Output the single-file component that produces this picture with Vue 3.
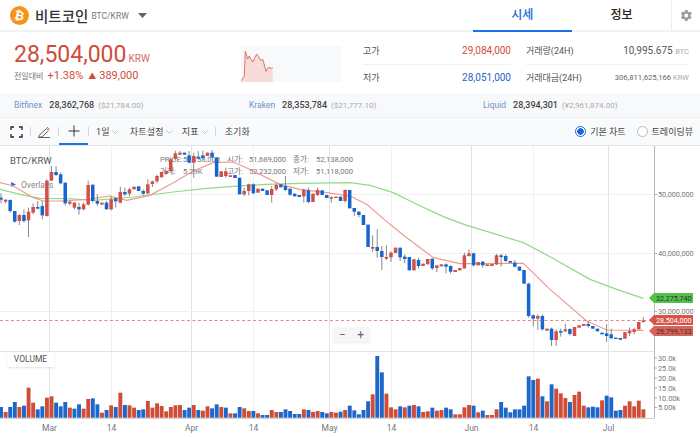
<script setup>
const raw = `b155,161,142,172 r161,167,160,172 b162,195,160,200 b195,227,195,230 r207,225,205,237 b207,225,190,230 r197,223,185,273 r183,200,172,205 b183,188,165,190 b180,208,165,220 r104,210,100,212 r78,104,60,104 b78,87,60,90 b85,112,80,115 b110,172,110,178 r167,173,165,178 r170,185,168,190 b183,190,170,206 r175,190,170,193 r117,176,104,178 b116,165,116,170 b165,173,145,180 r170,176,170,176 b170,190,165,190 r160,190,150,193 b157,166,155,185 r138,170,122,172 b138,145,125,150 r130,143,126,150 r122,130,122,130 b121,135,121,135 b135,143,130,148 r115,142,100,145 r106,114,104,123 r90,106,86,112 r78,94,78,94 r75,84,75,84 r40,75,40,78 r22,38,14,42 r20,26,15,28 b20,26,20,26 b28,50,15,52 r30,50,20,95 b32,38,15,40 b28,36,14,40 r20,30,20,30 b20,34,12,36 b35,92,35,92 r76,93,76,93 r76,90,65,95 r88,93,88,93 b87,96,87,96 b95,145,95,145 r135,145,125,150 r115,135,113,148 b115,142,112,143 r128,140,128,140 b128,135,128,135 b133,147,133,147 r129,147,120,170 r117,130,112,135 b115,124,115,124 b120,132,90,135 b128,146,128,150 b143,151,143,151 b147,153,147,153 r132,151,128,170 b133,168,125,172 r143,168,143,168 r132,147,125,150 b133,147,133,147 b147,156,147,156 r154,158,150,170 r152,156,152,156 b152,165,152,165 r132,165,130,170 b132,187,132,187 b186,197,186,210 b197,207,197,214 b207,237,207,237 b236,303,236,303 r303,308,268,318 b303,315,250,335 b315,333,300,372 r333,338,298,342 r320,334,316,348 r305,321,305,321 b305,334,305,345 b332,339,325,352 b333,373,333,373 r340,373,340,373 b342,360,335,368 r353,360,353,360 r339,355,339,355 b338,367,338,372 r358,366,358,378 r355,361,355,361 b355,362,352,382 b360,377,358,383 r372,378,372,378 r366,373,366,373 r328,367,320,368 r322,330,310,332 b322,358,320,362 r348,358,348,358 b347,358,345,365 r355,360,355,360 r354,360,354,360 r328,355,324,357 b328,333,324,362 b330,345,325,348 b345,350,345,350 b350,362,342,365 b362,374,362,374 b372,413,372,413 b413,510,410,515 b508,518,505,540 r510,518,505,552 b510,550,505,553 r548,554,548,554 b548,582,545,600 r556,582,550,600 b555,560,548,572 r550,556,533,558 b549,564,547,568 r543,570,543,570 r538,545,538,545 r534,540,534,540 b534,540,525,545 b540,548,540,548 b548,556,548,556 b560,565,560,565 b562,570,535,588 b565,577,548,578 b575,579,575,579 b576,581,576,581 r558,578,558,578 r555,562,545,570 r550,558,545,565 r528,550,528,550 r523,528,513,530`
const candles = raw.split(' ').map((s, i) => {
  const [t, b, wt, wb] = s.slice(1).split(',').map(Number)
  return { x: 1 + 4.588 * i, blue: s[0] === 'b', t: 145 + t / 3, b: 145 + b / 3, wt: 145 + wt / 3, wb: 145 + wb / 3 }
})
const volRaw = `b258 r273 b258 b243 r258 b254 r200 r245 b265 b256 r230 r226 b245 b256 b243 r260 b263 b250 r263 r234 b232 b250 r275 b267 r253 b258 r215 b252 r253 r260 b267 b265 r240 r260 r247 r255 r271 r258 r253 r252 b267 b260 r252 b267 r269 r256 b262 b250 r258 b260 r277 b277 b258 r262 r270 b270 r277 b282 b282 r267 r273 b273 b265 b270 b279 b279 r265 b267 r273 r270 b273 b277 r273 r275 b272 r267 b254 b268 b280 b267 b241 r220 b105 b154 r218 r259 r265 b256 r259 b254 r252 b256 r273 r271 b260 r269 r267 b260 b265 r280 r280 r259 r252 b254 r274 b269 r282 r282 r265 b243 b260 b274 b265 b265 b254 b166 b177 r173 b226 r241 b190 r203 r217 r231 b243 r222 r212 r254 b259 b257 b259 r238 b224 b229 b269 b267 r254 r241 r256 r239 r265`
const vols = volRaw.split(' ').map((s, i) => {
  const top = 320 + Number(s.slice(1)) / 3
  return { x: 1 + 4.588 * i - 1.9, blue: s[0] === 'b', y: top, h: 416.7 - top }
})
const pts = (a, ox) => a.map(([x, y]) => `${(x + ox) / 3},${145 + y / 3}`).join(' ')
const green = pts([[0,130],[60,145],[120,157],[200,158],[280,163],[400,153],[520,138],[620,127],[700,121],[800,115],[900,112],[1050,110]], 0) + ' ' +
  pts([[60,118],[130,140],[200,175],[280,212],[350,238],[430,262],[520,290],[600,332],[720,400],[800,430],[880,457]], 1050)
const red = pts([[0,110],[40,120],[100,155],[130,165],[190,165],[260,160],[330,150],[380,163],[450,148],[520,110],[580,75],[640,50],[700,48],[760,75],[840,115],[900,130],[980,140],[1050,150]], 0) + ' ' +
  pts([[50,175],[120,235],[170,275],[250,335],[330,353],[400,353],[520,352],[600,430],[710,525],[770,552],[880,553]], 1050)
const xTicks = [
  { x: 49.5, l: 'Mar', m: true }, { x: 111.5, l: '14' }, { x: 191.5, l: 'Apr', m: true }, { x: 253.5, l: '14' },
  { x: 329.5, l: 'May', m: true }, { x: 391.5, l: '14' }, { x: 471.5, l: 'Jun', m: true }, { x: 533.5, l: '14' }, { x: 608.5, l: 'Jul', m: true }
]
const yTicks = [{ y: 193.5, l: '50,000,000' }, { y: 252.5, l: '40,000,000' }, { y: 310.5, l: '30,000,000' }]
const volTicks = [{ y: 357, l: '30.0k' }, { y: 367, l: '25.0k' }, { y: 377, l: '20.0k' }, { y: 387, l: '15.0k' }, { y: 397, l: '10.00k' }, { y: 406.5, l: '5.00k' }]
const legend = [
  { x: 160, y: 161, t: 'PRICE:' }, { x: 183, y: 161, t: '52,138,000' }, { x: 227, y: 161, t: '시가:' }, { x: 249, y: 161, t: '51,689,000' }, { x: 293, y: 161, t: '종가:' }, { x: 316, y: 161, t: '52,138,000' },
  { x: 160, y: 173, t: '거래:' }, { x: 183, y: 173, t: '5.29K' }, { x: 227, y: 173, t: '고가:' }, { x: 249, y: 173, t: '52,232,000' }, { x: 293, y: 173, t: '저가:' }, { x: 316, y: 173, t: '51,118,000' }
]
</script>

<template>
  <div class="page">
    <header class="head">
      <div class="coin">
        <svg class="logo" width="19" height="19" viewBox="0 0 19 19"><circle cx="9.5" cy="9.5" r="9.5" fill="#f7931a"/><text x="9.5" y="13.6" text-anchor="middle" font-size="12" font-weight="700" fill="#fff" transform="rotate(12 9.5 9.5)" font-family="Roboto, sans-serif">₿</text></svg>
        <span class="name">비트코인</span>
        <span class="pair">BTC/KRW</span>
        <svg class="caret" width="9" height="5" viewBox="0 0 9 5"><path d="M0 0h9L4.500 5z" fill="#5c6470"/></svg>
      </div>
      <nav class="tabs">
        <span class="tab active">시세</span>
        <span class="tab">정보</span>
        <span class="gear">
          <svg width="13" height="13" viewBox="0 0 24 24"><path fill="#9a9ea3" d="M19.400 13c.1-.3.100-.7.100-1s0-.7-.1-1l2.100-1.600c.2-.2.200-.4.100-.6l-2-3.500c-.1-.2-.4-.3-.6-.2l-2.500 1c-.5-.4-1.100-.7-1.700-1L14 2.400c0-.2-.2-.4-.5-.4h-4c-.2 0-.5.200-.5.400l-.4 2.700c-.6.200-1.200.6-1.700 1l-2.500-1c-.2-.1-.5 0-.6.200l-2 3.500c-.1.200-.1.500.1.600L4 11c0 .3-.1.700-.1 1s0 .7.100 1l-2.100 1.600c-.2.200-.2.400-.1.600l2 3.500c.1.200.4.300.6.200l2.500-1c.5.400 1.100.7 1.700 1l.4 2.700c0 .2.200.4.500.4h4c.2 0 .5-.2.500-.4l.4-2.700c.6-.2 1.200-.6 1.700-1l2.500 1c.2.100.5 0 .6-.2l2-3.500c.1-.2.100-.5-.1-.6zM11.500 15.500a3.500 3.500 0 1 1 0-7 3.500 3.500 0 0 1 0 7z"/></svg>
        </span>
      </nav>
    </header>

    <section class="summary">
      <div class="price-box">
        <div class="price"><b>28,504,000</b><span>KRW</span></div>
        <div class="change"><em>전일대비</em><span>+1.38%</span><span class="tri">▲</span><span>389,000</span></div>
      </div>
      <div class="spark">
        <svg width="100" height="36" viewBox="0 0 100 36">
          <path d="M0 35 L3.300 30 L4.300 5 L6.700 13 L8.300 10 L11.700 16 L15.700 8 L20 14.700 L21.700 13 L25 25.300 L27.700 21 L30 22.700 L31.700 21 V36 H0 Z" fill="#f7dbd8"/>
          <polyline points="0,35 3.300,30 4.300,5 6.700,13 8.300,10 11.700,16 15.700,8 20,14.700 21.700,13 25,25.300 27.700,21 30,22.700 31.700,21" fill="none" stroke="#d9695c" stroke-width="0.900"/>
        </svg>
      </div>
      <div class="stats">
        <div class="stat line"><label>고가</label><span class="up">29,084,000</span></div>
        <div class="stat line"><label>거래량(24H)</label><span class="big">10,995.675 <i>BTC</i></span></div>
        <div class="stat"><label>저가</label><span class="down">28,051,000</span></div>
        <div class="stat"><label>거래대금(24H)</label><span class="small">306,811,625,166 <i>KRW</i></span></div>
      </div>
    </section>

    <section class="exch">
      <div class="ex e1"><a>Bitfinex</a><b>28,362,768</b><i>($21,784.00)</i></div>
      <div class="ex e2"><a>Kraken</a><b>28,353,784</b><i>($21,777.10)</i></div>
      <div class="ex e3"><a>Liquid</a><b>28,394,301</b><i>(¥2,961,874.00)</i></div>
    </section>

    <section class="tools">
      <div class="tool-left">
        <span class="ic i1"><svg width="13" height="12" viewBox="0 0 13 12"><path d="M1 4V1h3M9 1h3v3M12 8v3H9M4 11H1V8" fill="none" stroke="#222" stroke-width="1.300"/></svg></span>
        <span class="sep"></span>
        <span class="ic i2"><svg width="13" height="12" viewBox="0 0 13 12"><path d="M1 9.500 8.500 2.500l2 2L4 11H1zM0 11.500h12" fill="none" stroke="#555" stroke-width="0.900"/><path d="M9 1l2.500 2.500" stroke="#d05a4e" stroke-width="1"/></svg></span>
        <span class="sep"></span>
        <span class="ic i3"><svg width="12" height="12" viewBox="0 0 12 12"><path d="M6 .5v11M.5 6h11" stroke="#333" stroke-width="1"/></svg></span>
        <span class="sep"></span>
        <span class="tl t1">1일<svg class="chev" width="7" height="4" viewBox="0 0 7 4"><path d="M.5.500 3.500 3.500 6.500.5" fill="none" stroke="#aaa" stroke-width=".7"/></svg></span>
        <span class="tl t2">차트설정<svg class="chev" width="7" height="4" viewBox="0 0 7 4"><path d="M.5.500 3.500 3.500 6.500.5" fill="none" stroke="#aaa" stroke-width=".7"/></svg></span>
        <span class="tl t3">지표<svg class="chev" width="7" height="4" viewBox="0 0 7 4"><path d="M.5.500 3.500 3.500 6.500.5" fill="none" stroke="#aaa" stroke-width=".7"/></svg></span>
        <span class="sep s4"></span>
        <span class="tl t4">초기화</span>
      </div>
      <div class="tool-right">
        <span class="radio on"></span><span class="rl r1">기본 차트</span>
        <span class="radio"></span><span class="rl">트레이딩뷰</span>
      </div>
    </section>

    <section class="chart">
      <svg class="plot" width="700" height="292" viewBox="0 145 700 292">
        <g v-for="t in xTicks" :key="t.x + t.l">
          <line :x1="t.x" :x2="t.x" y1="145" y2="417" :stroke="t.m ? '#e2e3e5' : '#f0f0f1'" stroke-width="1"/>
          <text :x="t.x" y="430" text-anchor="middle" class="axis">{{ t.l }}</text>
        </g>
        <g v-for="t in yTicks" :key="t.y">
          <line x1="0" x2="654" :y1="t.y" :y2="t.y" stroke="#f0f0f1"/>
          <line x1="654" x2="657" :y1="t.y" :y2="t.y" stroke="#aaa"/>
          <text x="658" :y="t.y + 2.5" class="yaxis">{{ t.l }}</text>
        </g>
        <text x="10" y="163" class="sym">BTC/KRW</text>
        <path d="M11 181l5 2.500-5 2.500z" fill="#2d6cd0"/>
        <text x="21" y="187" class="over">Overlays</text>
        <text v-for="l in legend" :key="l.x + '-' + l.y" :x="l.x" :y="l.y" class="leg">{{ l.t }}</text>

        <polyline :points="green" fill="none" stroke="#8fdc85" stroke-width="1.200"/>
        <polyline :points="red" fill="none" stroke="#ef9a90" stroke-width="1.200"/>

        <g v-for="c in candles" :key="c.x">
          <line :x1="c.x" :x2="c.x" :y1="c.wt" :y2="c.wb" stroke="#6b6b6b" stroke-width="0.800"/>
          <rect :x="c.x - 1.750" :y="c.t" width="3.500" :height="Math.max(c.b - c.t, 1)" :fill="c.blue ? '#1566cf' : '#d2504a'"/>
        </g>

        <line x1="0" x2="654" y1="319.500" y2="319.500" stroke="#e46a60" stroke-width="0.800" stroke-dasharray="3 2.500"/>
        <line x1="654.500" x2="654.500" y1="145" y2="417" stroke="#b9b9b9"/>
        <line x1="0" x2="654" y1="350.500" y2="350.500" stroke="#e2e3e5"/>
        <line x1="0" x2="654.500" y1="417.500" y2="417.500" stroke="#cfcfcf"/>

        <rect v-for="v in vols" :key="v.x" :x="v.x" :y="v.y" width="3.900" :height="v.h" :fill="v.blue ? '#1c66cc' : '#cf4c36'"/>

        <g v-for="t in volTicks" :key="t.y">
          <line x1="654" x2="657" :y1="t.y" :y2="t.y" stroke="#aaa"/>
          <text x="658" :y="t.y + 2.5" class="yaxis">{{ t.l }}</text>
        </g>

        <path d="M649 297l5-5h39v10h-39z" fill="#52c44a"/>
        <text x="656" y="299.700" class="tag dark">32,275,740</text>
        <path d="M649 319l5-5h39v10h-39z" fill="#d9534a"/>
        <text x="656" y="321.700" class="tag white">28,504,000</text>
        <path d="M649 330l5-5h39v10h-39z" fill="#d9625a"/>
        <text x="656" y="332.700" class="tag dark">26,799,133</text>
      </svg>
      <div class="zoom"><span>−</span><span>+</span></div>
      <div class="vlabel">VOLUME</div>
    </section>
  </div>
</template>

<style scoped>
.page { position: relative; width: 700px; height: 437px; overflow: hidden; background: #fff; font-family: Roboto, "Noto Sans CJK KR", sans-serif; color: #333; }
.head { display: flex; justify-content: space-between; height: 30px; border-bottom: 2px solid #f2f3f5; box-sizing: content-box; }
.coin { display: flex; align-items: center; padding-left: 10px; }
.logo { margin-right: 6px; }
.name { font-size: 14.500px; font-weight: 500; color: #333; margin-right: 3px; }
.pair { font-size: 8.500px; color: #777; margin-right: 9px; padding-top: 2px; }
.caret { margin-top: 1px; }
.tabs { display: flex; height: 30px; }
.tab { width: 99.500px; text-align: center; font-size: 12px; font-weight: 500; line-height: 30px; color: #222; box-sizing: border-box; }
.tab.active { color: #1a66d6; border-bottom: 2px solid #1a73e8; height: 32px; }
.tabs .tab:nth-child(2) { width: 99px; }
.gear { width: 29px; border-left: 1px solid #eceded; display: flex; align-items: center; justify-content: center; box-sizing: border-box; }
.summary { display: flex; height: 61px; position: relative; }
.price-box { width: 241px; padding: 10px 0 0 14px; box-sizing: border-box; }
.price { display: flex; align-items: baseline; color: #cf4c3d; }
.price b { font-size: 23px; font-weight: 400; line-height: 26px; }
.price span { font-size: 10px; margin-left: 2px; color: #d66a5e; }
.change { display: flex; align-items: center; gap: 3px; color: #cf4c3d; font-size: 11px; margin-top: 1px; }
.change em { font-style: normal; color: #777; font-size: 8px; margin-right: 1px; }
.change .tri { font-size: 8px; margin-left: 2px; }
.spark { width: 100px; height: 36px; margin-top: 14px; background: #f8f9fa; }
.spark svg { display: block; }
.stats { margin-left: 22px; width: 326px; display: grid; grid-template-columns: 148px 163px; column-gap: 15px; grid-auto-rows: 26.500px; padding-top: 6px; }
.stat { display: flex; justify-content: space-between; align-items: center; font-size: 9px; color: #555; }
.stat.line { border-bottom: 1px solid #f0f1f3; }
.stat label { font-size: 9px; color: #555; }
.up { color: #cf4c3d; font-size: 10px; }
.down { color: #2a63c9; font-size: 10px; }
.big { font-size: 10px; color: #555; }
.small { font-size: 7.700px; color: #666; }
.stat i { font-style: normal; color: #aaa; font-size: 7.500px; }
.exch { position: relative; height: 24px; background: #f7f9fb; border-bottom: 1px solid #eef0f2; display: flex; margin-top: 0; align-items: center; font-size: 9.500px; }
.ex { display: flex; align-items: baseline; white-space: nowrap; }
.e1 { padding-left: 14px; width: 249px; box-sizing: border-box; }
.e2 { width: 234px; }
.ex a { color: #6f93c7; font-size: 8.500px; margin-right: 7px; }
.ex b { font-weight: 500; color: #444; font-size: 9px; margin-right: 4px; }
.ex i { font-style: normal; color: #aaa; font-size: 8px; }
.tools { display: flex; justify-content: space-between; align-items: center; height: 28px; background: #f9fafb; border-bottom: 1px solid #e2e3e5; box-sizing: border-box; padding: 0 7px 0 10px; }
.tool-left { display: flex; align-items: center; height: 100%; font-size: 9px; color: #444; position: relative; }
.ic { display: flex; align-items: center; justify-content: center; height: 100%; }
.i1 { width: 13px; margin-right: 7px; }
.i2 { width: 13px; margin: 0 7px 0 7px; }
.i3 { width: 29px; height: 100%; border-bottom: 2px solid #1a73e8; box-sizing: border-box; margin-right: 0; }
.sep { width: 1px; height: 9px; background: #d5d7da; }
.tl { display: inline-flex; align-items: center; white-space: nowrap; letter-spacing: .2px; }
.t1 { margin-left: 7px; }
.t2 { margin-left: 11px; }
.t3 { margin-left: 9px; }
.t4 { margin-left: 9px; }
.s4 { margin-left: 7px; }
.chev { margin-left: 2px; }
.tool-right { display: flex; align-items: center; font-size: 9px; color: #444; }
.radio { width: 9px; height: 9px; border: 1px solid #bbb; border-radius: 50%; background: #fff; display: inline-block; margin-right: 4px; }
.radio.on { border-color: #1a66d6; background: radial-gradient(circle, #1a66d6 3px, #fff 3.500px); }
.r1 { margin-right: 11px; }
.chart { position: relative; height: 292px; }
.plot { display: block; }
.axis { font-size: 8.500px; fill: #777; font-family: Roboto, sans-serif; }
.yaxis { font-size: 7.300px; fill: #777; font-family: Roboto, sans-serif; }
.sym { font-size: 9.500px; fill: #555; font-family: Roboto, sans-serif; }
.over { font-size: 8.500px; fill: #888; font-family: Roboto, sans-serif; }
.leg { font-size: 7.600px; fill: #777; font-family: Roboto, "Noto Sans CJK KR", sans-serif; }
.tag { font-size: 7.300px; font-family: Roboto, sans-serif; }
.dark { fill: #333; }
.white { fill: #fff; }
.zoom { position: absolute; left: 333px; top: 181px; width: 37px; height: 15px; background: #f6f6f7; border-radius: 2px; display: flex; justify-content: space-around; align-items: center; font-size: 12px; color: #666; box-shadow: 0 1px 2px rgba(0,0,0,.08); }
.vlabel { position: absolute; left: 7px; top: 206px; width: 47px; height: 15px; background: #fff; box-shadow: 0 1px 2px rgba(0,0,0,.12); font-size: 8.500px; color: #555; text-align: center; line-height: 15px; }
</style>
